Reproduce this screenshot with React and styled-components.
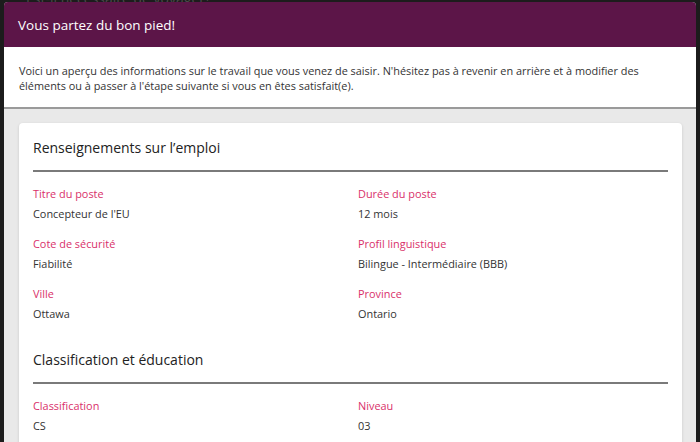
import React from 'react';
import styled, { createGlobalStyle } from 'styled-components';

const GlobalStyle = createGlobalStyle`
  html, body {
    margin: 0;
    padding: 0;
    background: #1c1c1c;
    font-family: 'Open Sans', 'Noto Sans', sans-serif;
    overflow: hidden;
  }
`;

const Backdrop = styled.div`
  height: 442px;
  background: #1c1c1c;
  position: relative;
  overflow: hidden;
`;

const PageBehind = styled.p`
  margin: 0;
  position: absolute;
  top: -11px;
  left: 26px;
  font-size: 14px;
  color: #4a4a4a;
`;

const Modal = styled.div`
  position: absolute;
  top: 2px;
  left: 4px;
  right: 4px;
  bottom: 0;
  display: flex;
  flex-direction: column;
  border-radius: 4px 4px 0 0;
  overflow: hidden;
  background: #e9e9e9;
`;

const Header = styled.header`
  flex-shrink: 0;
  height: 45px;
  display: flex;
  align-items: center;
  padding: 0 14px;
  background: #5c1548;
  color: #fff;
  font-size: 13.5px;
`;

const Intro = styled.div`
  flex-shrink: 0;
  background: #fff;
  padding: 16px 15px 14px;
  border-bottom: 2px solid #9a9a9a;
  font-size: 10.9px;
  line-height: 15px;
  color: #333;
`;

const Body = styled.div`
  flex: 1;
  min-height: 0;
  padding: 14px 14px 0 15px;
`;

const Card = styled.section`
  background: #fff;
  border-radius: 4px;
  box-shadow: 0 1px 3px rgba(0, 0, 0, 0.15);
  padding: 15px 14px 20px;
  height: 100%;
`;

const SectionTitle = styled.h2`
  margin: ${(p) => (p.$first ? '0' : '28px 0 0')};
  padding-bottom: 12px;
  border-bottom: 2px solid #7a7a7a;
  font-size: 14px;
  font-weight: 400;
  line-height: 20px;
  color: #222;
`;

const Grid = styled.dl`
  margin: 14px 0 0;
  display: grid;
  grid-template-columns: 1fr 1fr;
  column-gap: 15px;
  row-gap: 14px;
`;

const Field = styled.div`
  display: flex;
  flex-direction: column;
  gap: 4px;
`;

const Label = styled.dt`
  font-size: 10.9px;
  line-height: 16px;
  color: #d9306a;
`;

const Value = styled.dd`
  margin: 0;
  font-size: 10.9px;
  line-height: 16px;
  color: #333;
`;

const sections = [
  {
    title: 'Renseignements sur l’emploi',
    fields: [
      ['Titre du poste', "Concepteur de l'EU"],
      ['Durée du poste', '12 mois'],
      ['Cote de sécurité', 'Fiabilité'],
      ['Profil linguistique', 'Bilingue - Intermédiaire (BBB)'],
      ['Ville', 'Ottawa'],
      ['Province', 'Ontario'],
    ],
  },
  {
    title: 'Classification et éducation',
    fields: [
      ['Classification', 'CS'],
      ['Niveau', '03'],
    ],
  },
];

export default function App() {
  return (
    <Backdrop>
      <GlobalStyle />
      <PageBehind>Est-il nécessaire de voyager?</PageBehind>
      <Modal>
        <Header>Vous partez du bon pied!</Header>
        <Intro>
          Voici un aperçu des informations sur le travail que vous venez de saisir. N'hésitez pas à revenir
          en arrière et à modifier des éléments ou à passer à l'étape suivante si vous en êtes satisfait(e).
        </Intro>
        <Body>
          <Card>
            {sections.map((s, i) => (
              <React.Fragment key={s.title}>
                <SectionTitle $first={i === 0}>{s.title}</SectionTitle>
                <Grid>
                  {s.fields.map(([label, value]) => (
                    <Field key={label}>
                      <Label>{label}</Label>
                      <Value>{value}</Value>
                    </Field>
                  ))}
                </Grid>
              </React.Fragment>
            ))}
          </Card>
        </Body>
      </Modal>
    </Backdrop>
  );
}
